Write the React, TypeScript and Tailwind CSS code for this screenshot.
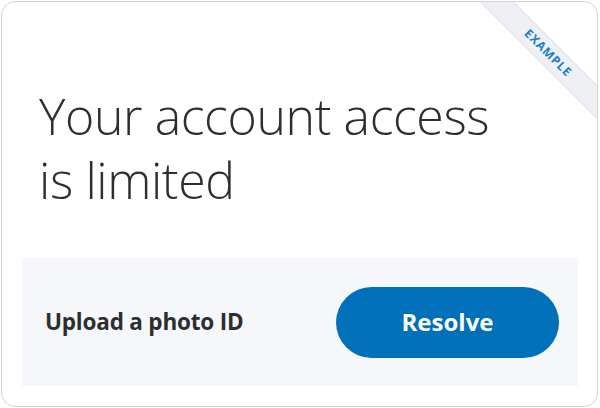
import React from 'react';

const App: React.FC = () => {
    return (
        <div className="w-[600px] h-[408px] bg-white p-px" style={{ fontFamily: '"Open Sans", "Liberation Sans", sans-serif' }}>
            <div className="relative w-[597px] h-[406px] overflow-hidden rounded-[14px] border border-[#d4d4d4] bg-white flex flex-col">
                {/* corner ribbon */}
                <div className="absolute left-[446px] top-[39px] w-[200px] h-[24px] rotate-45 bg-[#eef0f3] border-y border-[#e2e5e9] flex items-center justify-center">
                    <span className="text-[12px] font-bold tracking-[0.8px] text-[#1b80c2] leading-none">EXAMPLE</span>
                </div>

                <h1 className="mt-[82px] pl-[37px] text-[50px] font-light text-[#2c2e2f] tracking-[-0.4px]">
                    <div className="h-[64px] leading-[64px]">Your account access</div>
                    <div className="h-[64px] leading-[64px]">is limited</div>
                </h1>

                <div className="mt-auto mb-[20px] ml-[20px] mr-[19px] h-[128px] bg-[#f5f7fa] flex items-center justify-between pl-[23px] pr-[19px]">
                    <span className="text-[22.5px] font-bold text-[#2c2e2f] tracking-[-0.2px]">Upload a photo ID</span>
                    <button className="w-[223px] h-[71px] rounded-full bg-[#0070ba] text-white text-[24px] font-bold">
                        Resolve
                    </button>
                </div>
            </div>
        </div>
    );
};

export default App;
